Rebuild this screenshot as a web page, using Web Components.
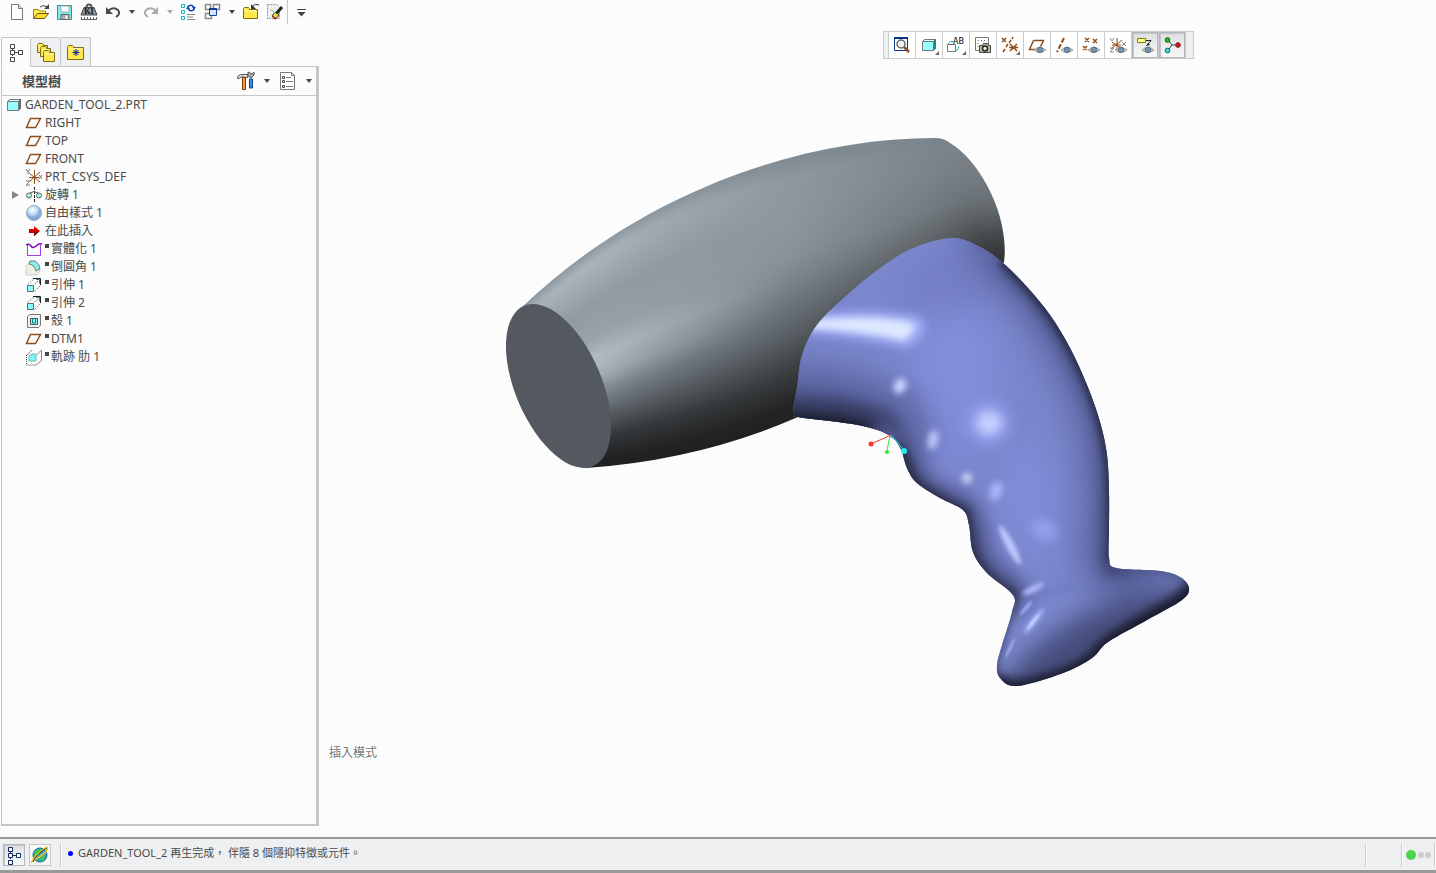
<!DOCTYPE html>
<html lang="zh-Hant">
<head>
<meta charset="utf-8">
<meta name="viewport" content="width=device-width, initial-scale=1">
<title>GARDEN_TOOL_2</title>
<style>
  html, body { margin: 0; height: 100%; }
  body {
    background: #fcfcfc; color: #4a4a4a;
    font: 12px/18px "Noto Sans", "Noto Sans CJK TC", sans-serif;
  }
</style>
</head>
<body>
<cad-app></cad-app>

<script>
const eye = (x, y) => `<g transform="translate(${x} ${y})"><path d="M-1 3Q4.500-2 11 3Q4.500 8-1 3Z" fill="#d9cdb8" stroke="#8b8b84" stroke-width=".8"/><circle cx="5" cy="2.800" r="2.800" fill="#6d93b8" stroke="#5c7286"/></g>`;
const folder = (x, y, w, h) => `<path d="M${x} ${y + 2}v-1l1-1h4l1 1v1h${w - 6}v${h}h-${w}z" fill="#ffe94a" stroke="#7c6a1c"/><path d="M${x + 1} ${y + 3.5}h${w - 2}" stroke="#fffbd0"/>`;
const more = '<path d="M20 16v4h-4z" fill="#666"/>';
const extrude = '<path d="M3.500 9.500l7-6M10.500 16.500l6-6M10.500 9.500l6-6" stroke="#888" stroke-dasharray="2 1" fill="none"/><path d="M9 3.500h7.500V10" fill="none" stroke="#222"/><path d="M12 4.500h3.500v4" fill="none" stroke="#2a8b85"/><path d="M3.500 10.500h6v6h-6z" fill="#8ff" stroke="#666"/>';
const hierarchy = c => `<path d="M6.500 6v8M8 10.500h5" stroke="${c}"/><path d="M4.500 2.500h4v4h-4zM4.500 8.500h4v4h-4zM4.500 15.500h4v4h-4zM12.500 8.500h4v4h-4z" fill="#fff" stroke="${c}"/>`;
const plane = '<path d="M6.500 5.500h10l-5 9h-9z" fill="none" stroke="#8f4d1c" stroke-width="1.500"/>';
const cube = '<path d="M3.500 6.500l2-2h11l-2 2z" fill="#e2ffff" stroke="#777"/><path d="M14.500 6.500l2-2v9l-2 2z" fill="#1a8d8b" stroke="#666"/><path d="M3.500 6.500h11v9h-11z" fill="#98ffff" stroke="#777"/>';

const ICONS = {
  new: '<path d="M4.500 2.500h7l4 4v11h-11z" fill="#fff" stroke="#777"/><path d="M11.500 2.500v4h4" fill="#ddd" stroke="#777"/>',
  open: '<path d="M2.500 16.500v-9h5l1 1.500h6v3" fill="#ffec4a" stroke="#a18a14"/><path d="M2.500 16.500l4-5h11l-4 5z" fill="#ffd92e" stroke="#665611"/><path d="M9 5q3-3 7 0" fill="none" stroke="#444"/><path d="M18 2v5h-5z" fill="#444"/>',
  save: '<path d="M2.500 3.500h14v14h-14z" fill="#7cf1f1" stroke="#3f8d91"/><path d="M6 4h8v6H6z" fill="#fff" stroke="#aaa"/><path d="M6 12.500h8v5H6z" fill="#aaa" stroke="#666"/><path d="M10.500 13.500h2V17h-2z" fill="#fff"/>',
  weight: '<path d="M7.500 5a2.500 2.500 0 1 1 5 0" fill="none" stroke="#555" stroke-width="2"/><path d="M5 5.500h10l3 7.500H2z" fill="#929292" stroke="#444"/><text x="10" y="12" font-family="Liberation Serif" font-size="8" font-weight="bold" text-anchor="middle" fill="#111">KI</text><path d="M2 17.500h16M2.500 15v2M5.500 15v2M8.500 15v2M11.500 15v2M14.500 15v2M17.500 15v2" stroke="#666"/>',
  undo: '<path d="M5 9q5-5 10-1q3 4-2 7" fill="none" stroke="#4a4a4a" stroke-width="2"/><path d="M3 5v7h7z" fill="#4a4a4a"/>',
  redo: '<path d="M15 9q-5-5-10-1q-3 4 2 7" fill="none" stroke="#aaa" stroke-width="2"/><path d="M17 5v7h-7z" fill="#aaa"/>',
  regen: '<path d="M2.500 2.500h3v3h-3zM2.500 8.500h3v3h-3zM2.500 14.500h3v3h-3z" fill="#efffff" stroke="#20b8b8"/><path d="M8 12.500h8M8 17.500h8M8 15h6" stroke="#888"/><path d="M8.500 5.500a3.500 3.500 0 0 1 6.500 0M15.500 6.500a3.500 3.500 0 0 1-6.500 0" fill="none" stroke="#1544b8" stroke-width="1.500"/><path d="M13 5h4l-2 3zM7 7h4l-2-3z" fill="#1544b8"/>',
  windows: '<path d="M2.500 2.500h5v5h-5zM10.500 2.500h6v5h-6zM2.500 11.500h6v5h-6z" fill="#fff" stroke="#888" stroke-width="1.500"/><path d="M6.500 6.500h7v7h-7z" fill="#d5e8ff" stroke="#16419a"/><path d="M6 6h8v2H6z" fill="#16419a"/>',
  closefolder: folder(2.5, 5.5, 14, 9) + '<path d="M12 4q2-3 6-1" fill="none" stroke="#333"/><path d="M10 2v5h5z" fill="#333"/>',
  erase: '<path d="M2.500 2.500h9l3 3v11h-12z" fill="#eee" stroke="#999" stroke-dasharray="2 1"/><path d="M17 5l-6 7" stroke="#222" stroke-width="3"/><path d="M10 10l4 3-3 4-4-3z" fill="#efd83c" stroke="#333"/><path d="M5 7l5 4" stroke="#9c9"/><path d="M8 15l3 2" stroke="#b22" stroke-width="2"/>',
  caret: '<path d="M7 8h6l-3 4z" fill="#444"/>',
  caretoff: '<path d="M7 8h6l-3 4z" fill="#aaa"/>',
  custom: '<path d="M6 7.500h9" stroke="#444"/><path d="M6.500 10h8l-4 4.500z" fill="#444"/>',
  tree: hierarchy('#444'),
  treeblue: hierarchy('#152c60'),
  folders: folder(1.5, 1.5, 10, 7) + folder(4.5, 4.5, 10, 8) + folder(7.5, 8.5, 11, 9),
  favorite: folder(1.5, 3.5, 16, 12) + '<path d="M10 7v7M6.500 10.500h7M7.500 8l5 5M12.500 8l-5 5" stroke="#0c2590"/>',
  tools: '<path d="M1.500 5.500l3-2h7v3H9L8 6H5L2 8z" fill="#d9e2e4" stroke="#555"/><path d="M6.500 6.500h3v12h-3z" fill="#ef9d3a" stroke="#813b0a"/><path d="M12 1v4l3 2 3-3V1l-2 2z" fill="#aaa" stroke="#555"/><path d="M13.500 8h3v9h-3z" fill="#3a8ef0" stroke="#124080"/>',
  list: '<path d="M2.500 1.500h11l3 3v14h-14z" fill="#fff" stroke="#777"/><path d="M13.500 1.500v3h3M8 6.500h5M8 10.500h7M8 15.500h7" fill="none" stroke="#777"/><path d="M4.500 5.500h2v2h-2zM4.500 9.500h2v2h-2zM4.500 14.500h2v2h-2z" fill="#fff" stroke="#444"/>',
  part: cube,
  plane,
  csys: '<path d="M10.500 3v14M5 6l11 9M5 15l11-10M5 10.500h10" stroke="#8f4d1c"/><path d="M2 2l2 3 2-3M4 5v2M2 14h4l-4 4h4M15 8l3 4M18 8l-3 4" fill="none" stroke="#777"/>',
  revolve: '<path d="M10.500 2v16" stroke="#222" stroke-dasharray="3 1"/><ellipse cx="5" cy="10.500" rx="2.500" ry="2.500" fill="#a9efe8" stroke="#666"/><ellipse cx="15" cy="10.500" rx="2.500" ry="2.500" fill="#a9efe8" stroke="#666"/><path d="M6 8q4-3 8 0" fill="none" stroke="#555"/>',
  sphere: '<defs><radialGradient id="b" cx=".4" cy=".3"><stop stop-color="#fff"/><stop offset=".6" stop-color="#c3dcf6"/><stop offset="1" stop-color="#88aad2"/></radialGradient></defs><circle cx="10" cy="10" r="7.500" fill="url(#b)" stroke="#8eaaca"/>',
  arrow: '<path d="M5 8h5V5l6 5-6 5v-3H5z" fill="#e80000"/><path d="M5 10.500h10L10 15.500v-4H5z" fill="#7c1010"/>',
  solidify: '<path d="M3.500 6v10.500h13V6" fill="none" stroke="#a33de0"/><path d="M2 6q3-2 5 1t5 0 6-2" fill="none" stroke="#7a0fb5" stroke-width="1.500"/>',
  round: '<path d="M2 9l5-4q8 2 9 9l-3 4H2z" fill="#efeee0" stroke="#ccc"/><path d="M6 4h5q5 3 5 8l-4 2q-1-6-7-7z" fill="#82f2ee" stroke="#777"/>',
  extrude,
  shell: '<path d="M3.500 5.500l2-2h11v11l-2 2h-11z" fill="#f2f2f2" stroke="#777"/><path d="M6.500 7.500h7v6h-7z" fill="#7ff" stroke="#555"/><path d="M8.500 7v5h3V7" fill="none" stroke="#277"/>',
  rib: '<path d="M2.500 8v10H12" fill="none" stroke="#444" stroke-dasharray="1 1"/><path d="M3 8l5-5M12 18l5-4M12.500 8l5-5v11" fill="none" stroke="#888"/><path d="M5 9l3-2h4v7H5z" fill="#80f6f2" stroke="#6bb"/>',
  zoomfit: '<path d="M2.500 2.500h13v13h-13z" fill="#fff" stroke="#0d3486"/><path d="M2 3h14" stroke="#0d3486" stroke-width="2"/><circle cx="9" cy="9" r="4" fill="#f2f2f2" stroke="#666" stroke-width="1.500"/><path d="M12 12l5 5" stroke="#8f4d1c" stroke-width="2.500"/>',
  shade: cube + more,
  views: '<path d="M1.500 9.500v7h8v-7z" fill="#fff" stroke="#777"/><path d="M1.500 9.500l3-3h3" fill="none" stroke="#19a6a0"/><path d="M9.500 16.500l3-3v-2" stroke="#19a6a0"/><text x="7" y="9" font-family="DejaVu Sans Mono" font-size="9" fill="#111">AB</text>' + more,
  camera: '<path d="M2.500 2.500h13v13h-13z" fill="#fff" stroke="#777"/><path d="M5 5v8M8 5.500h6" stroke="#666" stroke-dasharray="1 2"/><path d="M6.500 10.500h3l1-2h4l1 2h2v7h-11z" fill="#b7bea3" stroke="#444"/><circle cx="12" cy="13.500" r="2.500" fill="#eee" stroke="#222" stroke-width="1.500"/>',
  datums: '<path d="M2 3l4 4M6 3L2 7M9 8l2-3M12 4l1-2M3 17l2-3M6 12l2-3M10 9l7 7M17 9l-7 7M9 12.500h9" stroke="#8f4d1c" stroke-width="1.500"/>' + more,
  planeEye: '<path d="M6.500 5.500h10l-3 6M8 14.500H2.500l4-9" fill="none" stroke="#8f4d1c" stroke-width="1.500"/>' + eye(8, 12),
  axisEye: '<path d="M10 3L3 17" stroke="#8f4d1c" stroke-width="2" stroke-dasharray="5 2"/>' + eye(8, 12),
  pointEye: '<path d="M4 3l4 4M8 3L4 7M12 4l4 4M16 4l-4 4M2 11l4 4M6 11l-4 4" stroke="#8f4d1c" stroke-width="1.500"/>' + eye(8, 12),
  csysEye: '<path d="M9 3v12M4 7l9 6M3 14l11-9M4 10h9" stroke="#8f4d1c"/><path d="M2 3l2 3 2-3M2 13h4l-4 4h4M14 7l4 4M18 7l-4 4" fill="none" stroke="#888"/>' + eye(8, 12),
  noteEye: '<path d="M2.500 3.500h8v4h-8z" fill="#ffff8c" stroke="#8a7c00"/><path d="M11 5.500h5l-4 5" fill="none" stroke="#222"/><path d="M11 11l2-3 2 2z" fill="#222"/>' + eye(8, 12),
  spin: '<path d="M6 5l4 5h6M10 10l-4 5" fill="none" stroke="#444"/><circle cx="5.500" cy="5" r="2.300" fill="#19c923" stroke="#12590f"/><circle cx="16" cy="10" r="2.300" fill="#e81313" stroke="#701010"/><circle cx="5.500" cy="15.500" r="2.300" fill="#36e2e8" stroke="#0e5c60"/>',
  browser: '<circle cx="10" cy="10" r="7" fill="#27a2e0" stroke="#19609c"/><path d="M5 6q5-4 8 0l-4 4q-4 3-5 0zM11 11q5-2 4 2t-5 3z" fill="#3fc34c"/><path d="M2 17Q4 10 17 2q2 4-8 10t-7 5" fill="none" stroke="#f0c71d" stroke-width="1.500"/><path d="M3 17Q6 9 17 3" fill="none" stroke="#25402c"/>'
};

customElements.define('ui-icon', class extends HTMLElement {
  connectedCallback() {
    this.attachShadow({ mode: 'open' }).innerHTML = `
      <style>:host { display: block; width: 20px; height: 20px; } svg { display: block; }</style>
      <svg width="20" height="20" viewBox="0 0 20 20" fill="none" aria-hidden="true">${ICONS[this.getAttribute('name')] || ''}</svg>`;
  }
});

/* Plain tool button; the host's attributes choose its look. */
customElements.define('tool-button', class extends HTMLElement {
  connectedCallback() {
    this.attachShadow({ mode: 'open' }).innerHTML = `
      <style>
        :host { display: block; width: 24px; height: 24px; flex: none; }
        :host([narrow]) { width: 14px; }
        :host([cell]) { width: 26px; height: 26px; border-right: 1px solid #c8ccd1; background: #fff; }
        :host([framed]) { width: 22px; height: 22px; }
        button { display: grid; place-content: center; width: 100%; height: 100%; box-sizing: border-box; padding: 0; border: 0; background: none; overflow: hidden; }
        :host([framed]) button { border: 1px solid #c4c8cc; background: #f8f8f8; }
        :host([pressed]) button { border: 1px solid #b4b7ba; background: linear-gradient(#dcdee0, #f8f8f8); box-shadow: inset 1px 1px #c3c6c9; }
      </style>
      <button type="button" aria-label="${this.getAttribute('label')}" ${this.hasAttribute('pressed') ? 'aria-pressed="true"' : ''}><ui-icon name="${this.getAttribute('icon')}"></ui-icon></button>`;
  }
});

customElements.define('quick-toolbar', class extends HTMLElement {
  connectedCallback() {
    const b = (i, l, n = '') => `<tool-button icon="${i}" label="${l}" ${n}></tool-button>`;
    this.attachShadow({ mode: 'open' }).innerHTML = `
      <style>
        :host { display: flex; height: 24px; padding-left: 5px; }
        i { width: 1px; background: #c3c7cb; margin-right: 6px; }
      </style>` +
      b('new', '新增') + b('open', '開啟') + b('save', '儲存') + b('weight', '質量') + b('undo', '復原') + b('caret', '復原清單', 'narrow') +
      b('redo', '重做') + b('caretoff', '重做清單', 'narrow') + b('regen', '再生') + b('windows', '視窗') + b('caret', '視窗清單', 'narrow') +
      b('closefolder', '關閉') + b('erase', '拭除') + '<i></i>' + b('custom', '自訂', 'narrow');
  }
});

customElements.define('graphics-toolbar', class extends HTMLElement {
  connectedCallback() {
    const items = [['zoomfit', '重新調整'], ['shade', '顯示型式'], ['views', '已儲存方向'], ['camera', '視圖管理員'], ['datums', '基準顯示'],
      ['planeEye', '平面顯示'], ['axisEye', '軸顯示'], ['pointEye', '點顯示'], ['csysEye', '座標系顯示'], ['noteEye', '註解顯示', 'pressed'], ['spin', '旋轉中心', 'pressed']];
    this.attachShadow({ mode: 'open' }).innerHTML = `
      <style>
        :host { display: flex; border: 1px solid #c8ccd1; background: #eef0f2; }
        i { width: 4px; border-right: 1px solid #c8ccd1; }
        i:last-child { width: 7px; border: 0; }
      </style><i></i>` +
      items.map(([i, l, p = '']) => `<tool-button cell icon="${i}" label="${l}" ${p}></tool-button>`).join('') + '<i></i>';
  }
});

customElements.define('tree-item', class extends HTMLElement {
  connectedCallback() {
    this.setAttribute('role', 'treeitem');
    this.attachShadow({ mode: 'open' }).innerHTML = `
      <style>
        :host { display: flex; align-items: center; height: 18px; padding-left: 9px; white-space: nowrap; }
        :host([root]) { padding-left: 2px; }
        .exp { width: 13px; height: 18px; padding: 0; border: 0; background: none; display: flex; align-items: center; }
        :host([root]) .exp { display: none; }
        :host([suppressed]) .mark { width: 4px; height: 4px; background: #444; margin: 0 2px 6px 0; }
        ui-icon { margin-right: 1px; }
      </style>
      ${this.hasAttribute('expandable')
        ? '<button class="exp" type="button" aria-label="展開"><svg width="9" height="10"><path d="M1 1v8l7-4z" fill="#888"/></svg></button>'
        : '<span class="exp"></span>'}
      <ui-icon name="${this.getAttribute('icon')}"></ui-icon><span class="mark"></span><slot></slot>`;
  }
});

customElements.define('model-tree', class extends HTMLElement {
  connectedCallback() {
    this.attachShadow({ mode: 'open' }).innerHTML = `
      <style>
        :host { display: flex; flex-direction: column; }
        .tabs { display: flex; padding-left: 1px; margin-bottom: -1px; }
        .tabs button { display: grid; place-content: center; width: 30px; height: 30px; box-sizing: border-box; padding: 0; border: 1px solid #c3c7cb; border-left-width: 0; border-radius: 2px 2px 0 0; background: #eef0f2; }
        .tabs button:first-child { background: #fcfcfc; border-left-width: 1px; border-bottom-color: #fcfcfc; position: relative; }
        section { flex: 1; display: flex; flex-direction: column; margin-left: 1px; border: 1px solid #c3c7cb; border-right-width: 3px; border-bottom-width: 2px; }
        header { display: flex; align-items: center; height: 28px; padding-left: 20px; border-bottom: 1px solid #c3c7cb; }
        h2 { flex: 1; margin: 0; font-size: 13px; line-height: 18px; font-weight: 700; }
        .gap { width: 2px; }
      </style>
      <div class="tabs" role="tablist">
        <button role="tab" aria-selected="true" aria-label="模型樹"><ui-icon name="tree"></ui-icon></button>
        <button role="tab" aria-label="資料夾瀏覽器"><ui-icon name="folders"></ui-icon></button>
        <button role="tab" aria-label="我的最愛"><ui-icon name="favorite"></ui-icon></button>
      </div>
      <section>
        <header><h2>模型樹</h2>
          <tool-button icon="tools" label="設定"></tool-button><span class="gap"></span><tool-button icon="caret" label="設定清單" narrow></tool-button><span class="gap"></span>
          <tool-button icon="list" label="顯示"></tool-button><span class="gap"></span><tool-button icon="caret" label="顯示清單" narrow></tool-button>
        </header>
        <div role="tree"><slot></slot></div>
      </section>`;
  }
});

/* Smooth outline through a list of points (Catmull-Rom). */
function outline(p, closed = true) {
  const n = p.length, at = i => closed ? p[(i + n) % n] : p[Math.max(0, Math.min(n - 1, i))];
  let d = `M${p[0]}`;
  for (let i = 0; i < (closed ? n : n - 1); i++) {
    const [a, b, c, e] = [at(i - 1), at(i), at(i + 1), at(i + 2)];
    const h = (u, v, w, s) => [u[0] + s * (w[0] - v[0]) / 6, u[1] + s * (w[1] - v[1]) / 6].map(x => x.toFixed(1));
    d += `C${h(b, a, c, 1)} ${h(c, b, e, -1)} ${c}`;
  }
  return d + (closed ? 'Z' : '');
}
const GRIP = [[952,238],[980,247],[1003,263],[1027,287],[1050,315],[1070,348],[1087,385],[1100,422],[1107,455],[1109,492],[1109,530],[1109,558],[1116,568],[1160,571],[1180,577],[1189,588],[1182,600],[1147,620],[1108,642],[1092,658],[1063,673],[1017,686],[1000,678],[997,665],[1002,645],[1012,612],[1013,595],[987,573],[973,552],[969,525],[963,510],[940,498],[917,483],[907,468],[900,447],[887,434],[863,426],[830,421],[798,417],[793,413],[797,388],[802,355],[817,325],[847,295],[880,268],[913,248]];

/* Shading of the barrel: colour by height (0 top edge, 1 bottom edge) at three stations along it. */
const SHADE = {
  600: [[0,'8e99a2'],[.05,'a9b4bd'],[.22,'909aa3'],[.36,'98a2ab'],[.45,'b0bbc3'],[.54,'a3adb5'],[.62,'7d868d'],[.72,'5a6166'],[.84,'333638'],[.93,'222324'],[1,'1f2021']],
  780: [[0,'828c93'],[.08,'8f99a1'],[.22,'8e979f'],[.36,'8a939a'],[.46,'7e868c'],[.56,'6b7379'],[.68,'565c61'],[.8,'3b3f41'],[.92,'232425'],[1,'1f2021']],
  970: [[0,'78828a'],[.2,'767e83'],[.4,'6b7277'],[.54,'575c5f'],[.68,'404344'],[.85,'2a2b2c'],[1,'1f2021']]
};
function shade(list, t) {
  let i = 1; while (i < list.length - 1 && list[i][0] < t) i++;
  const [a, ca] = list[i - 1], [b, cb] = list[i], k = Math.min(1, (t - a) / (b - a));
  const v = [0, 2, 4].map(o => Math.round(parseInt(ca.slice(o, o + 2), 16) * (1 - k) + parseInt(cb.slice(o, o + 2), 16) * k));
  return `rgb(${v})`;
}
function barrelStrips() {
  const top = [522,307, 640,190, 800,138, 941,138, 1010,138], bottom = [586,468, 690,466, 860,420, 1004,290, 1010,285];
  let defs = '', body = '';
  const n = 60;
  for (let i = 0; i < n; i++) {
    const t = i / n, q = top.map((v, j) => Math.round(v + (bottom[j] - v) * (i ? t : -.1)));
    defs += `<linearGradient id="s${i}" gradientUnits="userSpaceOnUse" x1="600" x2="970" y1="0" y2="0"><stop stop-color="${shade(SHADE[600], t)}"/><stop offset=".5" stop-color="${shade(SHADE[780], t)}"/><stop offset="1" stop-color="${shade(SHADE[970], t)}"/></linearGradient>`;
    body += `<path fill="url(#s${i})" d="M${q[0]} ${q[1]}C${q[2]} ${q[3]} ${q[4]} ${q[5]} ${q[6]} ${q[7]}L${q[8]} ${q[9]}V490H500Z"/>`;
  }
  return `<defs>${defs}</defs>${body}`;
}

customElements.define('model-view', class extends HTMLElement {
  connectedCallback() {
    const glow = (x, y, rx, ry, rot, c, blur = 3) => `<g filter="url(#f${blur})"><ellipse transform="translate(${x} ${y}) rotate(${rot})" rx="${rx}" ry="${ry}" fill="${c}"/></g>`;
    const rim = (pts, w, c, blur, o = 1) => `<path d="${outline(pts, false)}" fill="none" stroke="${c}" stroke-width="${w}" stroke-linecap="round" opacity="${o}" filter="url(#f${blur})"/>`;
    const G = GRIP;
    this.attachShadow({ mode: 'open' }).innerHTML = `
      <style>:host { display: block; min-height: 0; } svg { display: block; width: 100%; height: 100%; }</style>
      <svg viewBox="319 60 1117 680" role="img" aria-label="GARDEN_TOOL_2">
        <defs>
          ${[1, 2, 3, 5, 8, 12, 18].map(b => `<filter id="f${b}" filterUnits="userSpaceOnUse" x="450" y="80" width="800" height="660" color-interpolation-filters="sRGB"><feGaussianBlur stdDeviation="${b}"/></filter>`).join('')}
          <clipPath id="barrel"><path d="M520 309C640 193 800 138 935 138Q944 138 950 143C979 160 1010 215 1004 262L960 340 798 417Q700 460 586 468Z"/></clipPath>
          <clipPath id="grip"><path d="${outline(G)}"/></clipPath>
        </defs>
        <g clip-path="url(#barrel)"><g filter="url(#f2)">${barrelStrips()}</g></g>
        <ellipse transform="translate(558.5 386) rotate(66.7)" rx="87.300" ry="43.100" fill="#545960"/>
        <g clip-path="url(#grip)">
          <path d="M780 230h420v470H780z" fill="#7b87cd"/>
          ${glow(950, 385, 45, 80, 10, '#828edb', 18)}
          ${glow(1030, 500, 30, 60, -10, '#808cd8', 18)}
          ${glow(960, 275, 60, 30, -20, '#7580c6', 12)}
          ${rim([[1010,235],[1055,285],[1092,345],[1118,410],[1128,480],[1126,560]], 84, '#565f99', 18)}
          ${rim([[1015,262],[1056,310],[1093,375],[1114,440],[1118,500],[1116,562]], 26, '#353b60', 8)}
          ${rim([[1003,263],[1027,287],[1050,315],[1070,348],[1087,385],[1100,422],[1107,455],[1110,492],[1111,530],[1111,558]], 5, '#252942', 3)}
          ${rim([[770,415],[830,418],[880,436]], 96, '#565f9a', 18)}
          ${rim([[780,420],[840,424],[885,438]], 48, '#343a5c', 8)}
          ${rim([[785,419],[840,424],[888,437]], 14, '#1b1e30', 5)}
          ${rim([[888,440],[903,466],[922,492],[960,512],[970,535],[978,564],[1010,595]], 38, '#525a92', 8)}
          ${rim([[900,450],[907,470],[917,486],[940,501],[963,513]], 14, '#272b42', 5)}
          ${rim([[966,520],[969,535],[973,555],[987,576],[1011,596]], 12, '#2b2f49', 5)}
          ${rim([[905,395],[910,420],[916,440]], 12, '#656fae', 8)}
          <path d="M1020 660L1050 635Q1085 610 1125 596L1215 582V700H990Z" fill="#464e7d" filter="url(#f12)"/>
          ${rim([[1022,604],[1055,590],[1090,584]], 4, '#6f7abf', 3)}
          ${rim([[1112,566],[1160,569],[1190,580]], 8, '#4a5285', 5)}
          ${rim([[1192,592],[1182,603],[1147,623],[1110,646],[1092,664],[1063,679],[1017,691],[998,685]], 22, '#1b1d2f', 5)}
          ${rim([[994,680],[994,662],[1000,640],[1011,608],[1011,592]], 8, '#3a406a', 5)}
          <path d="M800 316Q880 306 922 318Q930 334 907 348Q865 338 800 332Z" fill="#a3aff8" filter="url(#f5)"/>
          <path d="M800 321Q880 314 914 324Q914 334 903 340Q860 330 800 328Z" fill="#dce8ff" filter="url(#f3)"/>
          ${glow(900, 386, 6, 8, 25, '#c9d3ff')}
          ${glow(933, 440, 5, 10, 10, '#bfcaff')}
          ${glow(989, 423, 20, 19, 20, '#9ba7f3', 8)}
          ${glow(989, 423, 12, 11, 0, '#c5ceff', 5)}
          ${glow(967, 478, 5, 5, 20, '#d2daff')}
          ${glow(996, 491, 6, 10, 15, '#a9b4fb')}
          ${glow(1044, 530, 14, 10, 30, '#939feb', 5)}
          ${glow(1010, 545, 4, 22, -28, '#bfc9ff', 2)}
          ${glow(1033, 589, 12, 3, -28, '#b2bdff', 2)}
          ${glow(1026, 608, 9, 2, -48, '#98a5f0', 1)}
          ${glow(1034, 621, 16, 3, -52, '#a9b6ff', 2)}
          ${glow(1033, 622, 10, 1, -52, '#dce8ff', 1)}
          ${glow(1010, 648, 11, 1, -64, '#b0beff', 1)}
        </g>
        <path d="M891 435L871 444" stroke="#f33"/><circle cx="871" cy="444" r="2.500" fill="#f33"/>
        <path d="M890 435L887 451" stroke="#2e2"/><circle cx="887" cy="452" r="2" fill="#2e2"/>
        <path d="M891 435L904 450" stroke="#2ee"/><circle cx="904" cy="451" r="3" fill="#2ee"/>
      </svg>`;
  }
});

customElements.define('status-bar', class extends HTMLElement {
  connectedCallback() {
    this.attachShadow({ mode: 'open' }).innerHTML = `
      <style>
        :host { display: flex; align-items: center; height: 31px; border-top: 2px solid #999; border-bottom: 3px solid #999; background: #eeeff1; padding-left: 3px; font-size: 11px; line-height: 18px; }
        .btns { display: flex; gap: 4px; }
        i { width: 1px; height: 24px; background: #ccc; border-right: 1px solid #fff; }
        .btns + i { margin: 0 6px 0 9px; }
        .dot { width: 5px; height: 5px; border-radius: 50%; background: #00f; margin: 0 5px 3px 0; }
        p { flex: 1; margin: 0 0 3px; white-space: nowrap; }
        .cell { width: 34px; }
        svg { display: block; }
      </style>
      <div class="btns"><tool-button framed pressed icon="treeblue" label="導覽器"></tool-button><tool-button framed icon="browser" label="瀏覽器"></tool-button></div>
      <i></i><span class="dot"></span><p role="status"><slot></slot></p>
      <i></i><span class="cell"></span><i></i>
      <svg width="31" height="14" role="img" aria-label="就緒"><circle cx="8" cy="7" r="5" fill="#4cd64c"/><circle cx="18" cy="7" r="3" fill="#ccc"/><circle cx="25" cy="7" r="3" fill="#ccc"/></svg><i></i>`;
  }
});

customElements.define('cad-app', class extends HTMLElement {
  connectedCallback() {
    this.attachShadow({ mode: 'open' }).innerHTML = `
      <style>
        :host { display: flex; flex-direction: column; min-height: 100vh; }
        main { flex: 1; display: flex; }
        model-tree { width: 319px; margin: 13px 0 11px; }
        .view { flex: 1; min-width: 0; display: flex; flex-direction: column; padding-top: 7px; }
        graphics-toolbar { align-self: flex-end; margin: 0 242px 1px 0; }
        model-view { flex: 1; }
        .mode { margin: 0; padding: 4px 10px 75px; color: #777; }
      </style>
      <quick-toolbar></quick-toolbar>
      <main>
        <model-tree>
          <tree-item root icon="part">GARDEN_TOOL_2.PRT</tree-item>
          <tree-item icon="plane">RIGHT</tree-item>
          <tree-item icon="plane">TOP</tree-item>
          <tree-item icon="plane">FRONT</tree-item>
          <tree-item icon="csys">PRT_CSYS_DEF</tree-item>
          <tree-item icon="revolve" expandable>旋轉 1</tree-item>
          <tree-item icon="sphere">自由樣式 1</tree-item>
          <tree-item icon="arrow">在此插入</tree-item>
          <tree-item icon="solidify" suppressed>實體化 1</tree-item>
          <tree-item icon="round" suppressed>倒圓角 1</tree-item>
          <tree-item icon="extrude" suppressed>引伸 1</tree-item>
          <tree-item icon="extrude" suppressed>引伸 2</tree-item>
          <tree-item icon="shell" suppressed>殼 1</tree-item>
          <tree-item icon="plane" suppressed>DTM1</tree-item>
          <tree-item icon="rib" suppressed>軌跡 肋 1</tree-item>
        </model-tree>
        <div class="view">
          <graphics-toolbar></graphics-toolbar>
          <model-view></model-view>
          <p class="mode">插入模式</p>
        </div>
      </main>
      <status-bar>GARDEN_TOOL_2 再生完成， 伴隨 8 個隱抑特徵或元件。</status-bar>`;
  }
});
</script>
</body>
</html>
